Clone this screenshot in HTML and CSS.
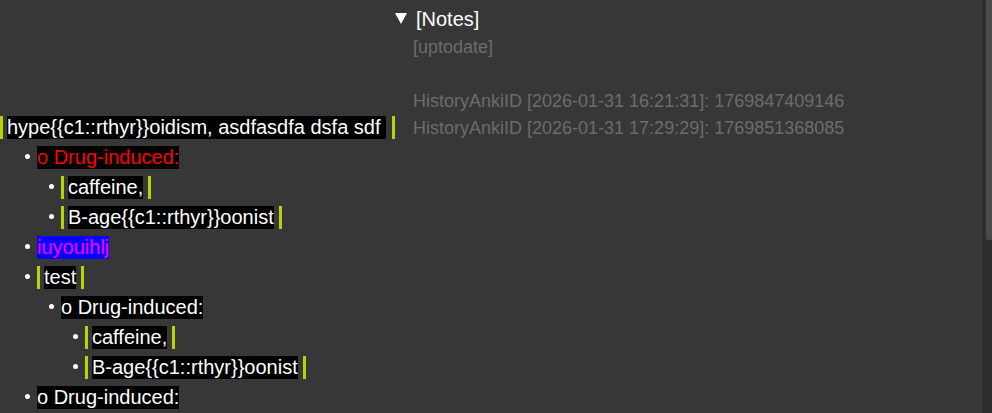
FILE: index.html
```html
<!DOCTYPE html>
<html>
<head>
<meta charset="utf-8">
<link rel="stylesheet" href="styles.css">
</head>
<body>
<div class="page">
  <div class="main">
    <div class="editor">
      <div class="row"><span class="bar"></span><span class="hl">hype{{c1::rthyr}}oidism, asdfasdfa dsfa sdf&nbsp;</span><span class="bar bar-after wide"></span></div>
      <ul class="list">
        <li>
          <div class="row item"><span class="hl red">o Drug-induced:</span></div>
          <ul class="list sub">
            <li><div class="row item"><span class="bar"></span><span class="hl">caffeine,</span><span class="bar bar-after"></span></div></li>
            <li><div class="row item"><span class="bar"></span><span class="hl">B-age{{c1::rthyr}}oonist</span><span class="bar bar-after"></span></div></li>
          </ul>
        </li>
        <li><div class="row item"><span class="hl pink">iuyouihlj</span></div></li>
        <li>
          <div class="row item"><span class="bar"></span><span class="hl">test</span><span class="bar bar-after"></span></div>
          <ul class="list sub">
            <li>
              <div class="row item"><span class="hl">o Drug-induced:</span></div>
              <ul class="list sub">
                <li><div class="row item"><span class="bar"></span><span class="hl">caffeine,</span><span class="bar bar-after"></span></div></li>
                <li><div class="row item"><span class="bar"></span><span class="hl">B-age{{c1::rthyr}}oonist</span><span class="bar bar-after"></span></div></li>
              </ul>
            </li>
          </ul>
        </li>
        <li><div class="row item"><span class="hl">o Drug-induced:</span></div></li>
      </ul>
    </div>
    <div class="notes">
      <div class="notes-head">
        <svg class="tri" width="12" height="11" viewBox="0 0 12 11"><polygon points="0,0 12,0 6,11" fill="#ffffff"/></svg>
        <span>[Notes]</span>
      </div>
      <div class="notes-body">
        <div class="gray">[uptodate]</div>
        <div class="gray blank"></div>
        <div class="gray">HistoryAnkiID [2026-01-31 16:21:31]: 1769847409146</div>
        <div class="gray">HistoryAnkiID [2026-01-31 17:29:29]: 1769851368085</div>
      </div>
    </div>
  </div>
  <div class="scrollbar"><div class="thumb"></div></div>
</div>
</body>
</html>
```

FILE: styles.css
```css
html, body {
  margin: 0;
  padding: 0;
  background: #373737;
}
body {
  font-family: "Liberation Sans", Arial, sans-serif;
  color: #ffffff;
  width: 992px;
  height: 413px;
  overflow: hidden;
}
.page {
  display: flex;
  height: 413px;
}
.main {
  flex: 1;
  display: flex;
  align-items: flex-start;
}
.editor {
  width: 395px;
  padding-top: 112px;
  font-size: 20px;
}
.row {
  display: flex;
  align-items: center;
  height: 30px;
  white-space: pre;
}
.hl {
  background: #000000;
  color: #ffffff;
  line-height: 23px;
  height: 23px;
}
.hl.red {
  color: #ff0000;
}
.hl.pink {
  color: #ff00ff;
  background: #0000ff;
}
.bar {
  width: 3px;
  height: 23px;
  background: #b8d400;
  margin-right: 4px;
}
.bar.bar-after {
  margin-right: 0;
  margin-left: 5px;
}
.bar.bar-after.wide {
  margin-left: 6px;
}
.list {
  list-style: none;
  margin: 0;
  padding: 0 0 0 25px;
}
.list.sub {
  padding-left: 24px;
}
.item::before {
  content: "";
  width: 5px;
  height: 5px;
  border-radius: 50%;
  background: #ffffff;
  margin-right: 7px;
  margin-top: -2px;
  flex: none;
}
.notes {
  padding-top: 4px;
}
.notes-head {
  display: flex;
  align-items: center;
  height: 30px;
  font-size: 20px;
  line-height: 30px;
}
.tri {
  display: block;
  margin-right: 9px;
  margin-top: -1px;
}
.notes-body {
  padding-left: 18px;
}
.gray {
  font-size: 18px;
  line-height: 27px;
  height: 27px;
  color: #6c6c6c;
  white-space: nowrap;
}
.scrollbar {
  width: 9px;
  height: 413px;
  background: #2e2e2e;
  border-left: 1px solid #2a2a2a;
  box-sizing: border-box;
  display: flex;
  justify-content: flex-end;
}
.thumb {
  width: 6px;
  height: 240px;
  background: #4a4a4a;
  border-bottom-left-radius: 3px;
}
```
